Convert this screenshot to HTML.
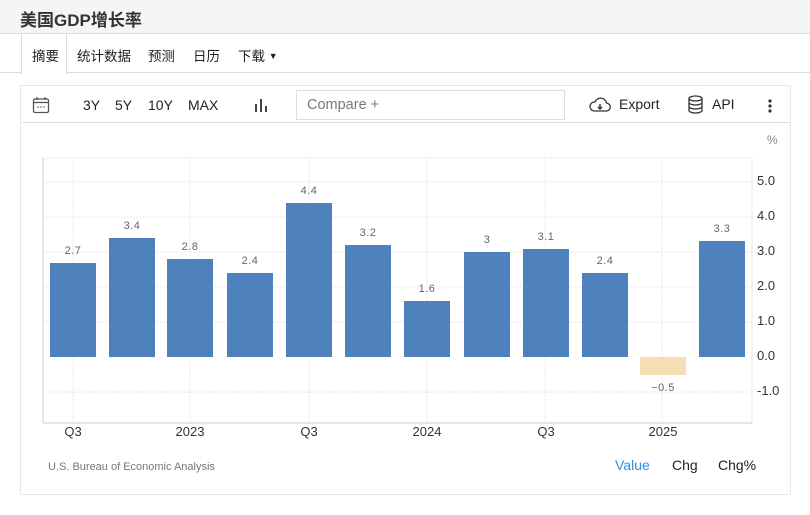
<!DOCTYPE html>
<html><head><meta charset="utf-8"><style>
*{margin:0;padding:0;box-sizing:border-box}
body{width:810px;height:515px;background:#fff;font-family:"Liberation Sans","Noto Sans CJK SC",sans-serif;position:relative;overflow:hidden;color:#222}
.hdr{position:absolute;left:0;top:0;width:810px;height:34px;background:#f5f5f5;border-bottom:1px solid #ddd}
.hdr h1{position:absolute;left:20px;top:6px;font-size:17px;font-weight:bold;color:#333}
.tabs{position:absolute;left:0;top:34px;width:810px;height:39px;border-bottom:1px solid #ddd}
.tab{position:absolute;top:11px;font-size:13.5px;color:#222}
.tab.act{top:0;left:21px;width:46px;height:40px;background:#fff;border-left:1px solid #ddd;border-right:1px solid #ddd;padding:11px 0 0 10px}
.card{position:absolute;left:20px;top:85px;width:771px;height:410px;border:1px solid #e8e8e8}
.tb{position:absolute;left:22px;top:86px;width:768px;height:37px;border:1px solid #ddd;border-left:none;border-right:none;border-top:none}
.t{position:absolute;font-size:14px;color:#222}
.cmp{position:absolute;left:296px;top:90px;width:269px;height:30px;border:1px solid #ddd;font-size:14.5px;color:#777;padding:6px 0 0 10px}
</style></head><body>
<div class="hdr"><h1>美国GDP增长率</h1></div>
<div class="tabs">
<div class="tab act">摘要</div>
<div class="tab" style="left:77px">统计数据</div>
<div class="tab" style="left:148px">预测</div>
<div class="tab" style="left:193px">日历</div>
<div class="tab" style="left:238px">下载 <span style="font-size:9px;position:relative;top:-2px">▼</span></div>
</div>
<div class="card"></div>
<div class="tb"></div>
<svg style="position:absolute;left:32px;top:96px" width="18" height="18" viewBox="0 0 18 18"><rect x="1.5" y="3" width="15" height="13.5" rx="1.5" fill="none" stroke="#555" stroke-width="1.3"/><line x1="1.5" y1="6.5" x2="16.5" y2="6.5" stroke="#555" stroke-width="1.3"/><line x1="5" y1="1" x2="5" y2="4" stroke="#555" stroke-width="1.3"/><line x1="13" y1="1" x2="13" y2="4" stroke="#555" stroke-width="1.3"/><circle cx="6" cy="11" r=".8" fill="#555"/><circle cx="9" cy="11" r=".8" fill="#555"/><circle cx="12" cy="11" r=".8" fill="#555"/></svg>
<div class="t" style="left:83px;top:97px">3Y</div>
<div class="t" style="left:115px;top:97px">5Y</div>
<div class="t" style="left:148px;top:97px">10Y</div>
<div class="t" style="left:188px;top:97px">MAX</div>
<svg style="position:absolute;left:254px;top:97px" width="14" height="16"><rect x="1" y="7" width="2" height="8" fill="#444"/><rect x="6" y="2" width="2" height="13" fill="#444"/><rect x="11" y="9" width="2" height="6" fill="#444"/></svg>
<div class="cmp">Compare +</div>
<svg style="position:absolute;left:589px;top:96px" width="22" height="18" viewBox="0 0 22 18"><path d="M5 15 H17 A4 4 0 0 0 17.5 7 A6 6 0 0 0 6 6 A4.5 4.5 0 0 0 5 15 Z" fill="none" stroke="#333" stroke-width="1.3"/><path d="M11 8 V13 M9 11 L11 13 L13 11" stroke="#333" stroke-width="1.5" fill="none"/></svg>
<div class="t" style="left:619px;top:96px">Export</div>
<svg style="position:absolute;left:687px;top:95px" width="17" height="19" viewBox="0 0 17 19"><ellipse cx="8.5" cy="3.5" rx="6.5" ry="2.5" fill="none" stroke="#333" stroke-width="1.3"/><path d="M2 3.5 V15.5 A6.5 2.5 0 0 0 15 15.5 V3.5 M2 7.5 A6.5 2.5 0 0 0 15 7.5 M2 11.5 A6.5 2.5 0 0 0 15 11.5" fill="none" stroke="#333" stroke-width="1.3"/></svg>
<div class="t" style="left:712px;top:96px">API</div>
<svg style="position:absolute;left:767px;top:98px" width="6" height="16"><circle cx="3" cy="3" r="1.6" fill="#333"/><circle cx="3" cy="8" r="1.6" fill="#333"/><circle cx="3" cy="13" r="1.6" fill="#333"/></svg>
<svg style="position:absolute;left:0;top:0" width="810" height="515" font-family="Liberation Sans, sans-serif">
<g stroke="#eaeaea" stroke-width="1" stroke-dasharray="2,1">
<line x1="43" y1="158" x2="752" y2="158"/>
<line x1="43" y1="182" x2="752" y2="182"/>
<line x1="43" y1="217" x2="752" y2="217"/>
<line x1="43" y1="252" x2="752" y2="252"/>
<line x1="43" y1="287" x2="752" y2="287"/>
<line x1="43" y1="322" x2="752" y2="322"/>
<line x1="43" y1="392" x2="752" y2="392"/>
<line x1="73" y1="158" x2="73" y2="423"/>
<line x1="190" y1="158" x2="190" y2="423"/>
<line x1="309" y1="158" x2="309" y2="423"/>
<line x1="427" y1="158" x2="427" y2="423"/>
<line x1="545" y1="158" x2="545" y2="423"/>
<line x1="662" y1="158" x2="662" y2="423"/>
</g>
<line x1="43" y1="158" x2="43" y2="423" stroke="#e6e6e6" stroke-width="2"/>
<line x1="43" y1="423" x2="752" y2="423" stroke="#e6e6e6" stroke-width="2"/>
<line x1="752" y1="158" x2="752" y2="423" stroke="#e6e6e6" stroke-width="1"/>
<g fill="#4f81bd">
<rect x="50" y="263" width="46" height="94"/>
<rect x="109" y="238" width="46" height="119"/>
<rect x="167" y="259" width="46" height="98"/>
<rect x="227" y="273" width="46" height="84"/>
<rect x="286" y="203" width="46" height="154"/>
<rect x="345" y="245" width="46" height="112"/>
<rect x="404" y="301" width="46" height="56"/>
<rect x="464" y="252" width="46" height="105"/>
<rect x="523" y="249" width="46" height="108"/>
<rect x="582" y="273" width="46" height="84"/>
<rect x="699" y="241" width="46" height="116"/>
</g>
<rect x="640" y="357" width="46" height="18" fill="#f5deb3"/>
<g font-size="11" fill="#666" text-anchor="middle" letter-spacing="0.5">
<text x="73" y="254">2.7</text><text x="132" y="229">3.4</text><text x="190" y="250">2.8</text>
<text x="250" y="264">2.4</text><text x="309" y="194">4.4</text><text x="368" y="236">3.2</text>
<text x="427" y="292">1.6</text><text x="487" y="243">3</text><text x="546" y="240">3.1</text>
<text x="605" y="264">2.4</text><text x="663" y="391">−0.5</text><text x="722" y="232">3.3</text>
</g>
<g font-size="13" fill="#333">
<text x="757" y="185">5.0</text><text x="757" y="220">4.0</text><text x="757" y="255">3.0</text>
<text x="757" y="290">2.0</text><text x="757" y="325">1.0</text><text x="757" y="360">0.0</text>
<text x="757" y="395">-1.0</text>
</g>
<text x="767" y="144" font-size="12" fill="#888">%</text>
<g font-size="13" fill="#333" text-anchor="middle">
<text x="73" y="436">Q3</text><text x="190" y="436">2023</text><text x="309" y="436">Q3</text>
<text x="427" y="436">2024</text><text x="546" y="436">Q3</text><text x="663" y="436">2025</text>
</g>
<text x="48" y="470" font-size="11" fill="#777">U.S. Bureau of Economic Analysis</text>
<text x="615" y="470" font-size="14" fill="#2e8fe0">Value</text>
<text x="672" y="470" font-size="14" fill="#222">Chg</text>
<text x="718" y="470" font-size="14" fill="#222">Chg%</text>
</svg>
</body></html>
